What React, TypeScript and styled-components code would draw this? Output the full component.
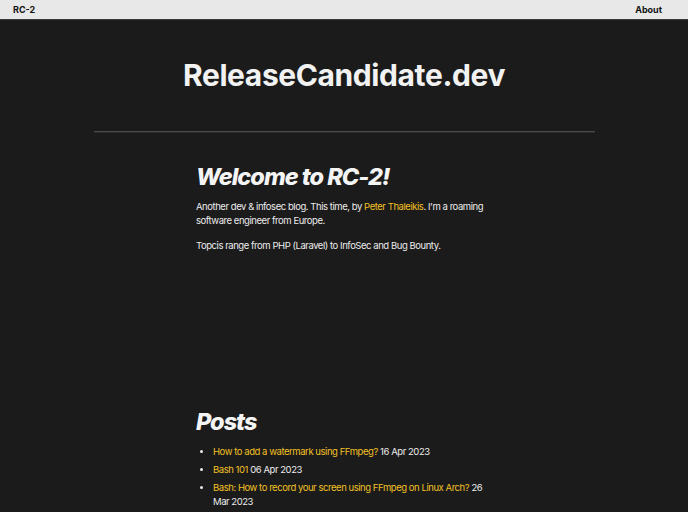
import React from "react";
import styled, { createGlobalStyle } from "styled-components";

const GlobalStyle = createGlobalStyle`
  html, body {
    margin: 0;
    padding: 0;
    background: #1b1b1b;
    color: #ececec;
    font-family: Inter, "Noto Sans", sans-serif;
  }
`;

const NavBar = styled.nav`
  height: 19px;
  display: flex;
  align-items: center;
  justify-content: space-between;
  padding: 0 26px 0 13px;
  background: #e8e8e8;
  border-bottom: 1px solid #3a3a3a;
`;

const NavLink = styled.a`
  color: #111;
  font-size: 9px;
  font-weight: 700;
  text-decoration: none;
`;

const SiteHeader = styled.header`
  display: flex;
  justify-content: center;
  padding-top: 37px;
  height: 74px;
`;

const SiteTitle = styled.h1`
  margin: 0;
  font-size: 30px;
  font-weight: 700;
  letter-spacing: -0.4px;
  color: #f2f2f2;
`;

const Rule = styled.hr`
  width: 501px;
  margin: 0 auto;
  border: none;
  border-top: 1px solid #4a4a4a;
  border-bottom: 1px solid #2a2a2a;
`;

const Main = styled.main`
  width: 296px;
  margin: 0 auto;
  padding-top: 29px;
`;

const Section = styled.section<{ $minHeight?: number }>`
  min-height: ${(p) => (p.$minHeight ? `${p.$minHeight}px` : "auto")};
`;

const Heading = styled.h2`
  margin: 0 0 9px;
  font-size: 23.5px;
  font-weight: 800;
  font-style: italic;
  letter-spacing: -1px;
  color: #f4f4f4;
`;

const Paragraph = styled.p`
  margin: 0 0 11px;
  font-size: 9.5px;
  line-height: 14px;
  letter-spacing: -0.45px;
`;

const Link = styled.a`
  color: #f2c024;
  text-decoration: none;
`;

const PostList = styled.ul`
  margin: 0;
  padding-left: 17px;
`;

const PostItem = styled.li`
  font-size: 9.5px;
  line-height: 13.5px;
  letter-spacing: -0.45px;
  margin-bottom: 4.5px;
`;

const posts = [
  { title: "How to add a watermark using FFmpeg?", date: "16 Apr 2023" },
  { title: "Bash 101", date: "06 Apr 2023" },
  { title: "Bash: How to record your screen using FFmpeg on Linux Arch?", date: "26 Mar 2023" },
];

export default function App() {
  return (
    <>
      <GlobalStyle />
      <NavBar>
        <NavLink href="#">RC-2</NavLink>
        <NavLink href="#">About</NavLink>
      </NavBar>
      <SiteHeader>
        <SiteTitle>ReleaseCandidate.dev</SiteTitle>
      </SiteHeader>
      <Rule />
      <Main>
        <Section $minHeight={245}>
          <Heading>Welcome to RC-2!</Heading>
          <Paragraph>
            Another dev &amp; infosec blog. This time, by <Link href="#">Peter Thaleikis</Link>. I'm a roaming
            software engineer from Europe.
          </Paragraph>
          <Paragraph>Topcis range from PHP (Laravel) to InfoSec and Bug Bounty.</Paragraph>
        </Section>
        <Section>
          <Heading>Posts</Heading>
          <PostList>
            {posts.map((post) => (
              <PostItem key={post.title}>
                <Link href="#">{post.title}</Link> {post.date}
              </PostItem>
            ))}
          </PostList>
        </Section>
      </Main>
    </>
  );
}
